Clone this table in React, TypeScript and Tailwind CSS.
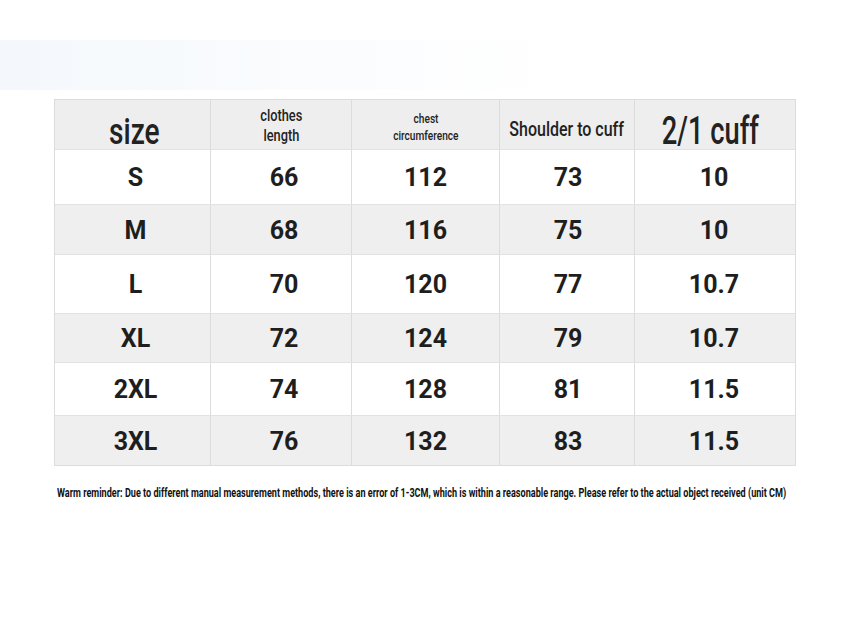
const rows = [
  { size: "S", len: "66", chest: "112", shoulder: "73", cuff: "10", h: "h-[55px]", bg: "bg-white" },
  { size: "M", len: "68", chest: "116", shoulder: "75", cuff: "10", h: "h-[50px]", bg: "bg-[#efefef]" },
  { size: "L", len: "70", chest: "120", shoulder: "77", cuff: "10.7", h: "h-[59px]", bg: "bg-white" },
  { size: "XL", len: "72", chest: "124", shoulder: "79", cuff: "10.7", h: "h-[49px]", bg: "bg-[#efefef]" },
  { size: "2XL", len: "74", chest: "128", shoulder: "81", cuff: "11.5", h: "h-[53px]", bg: "bg-white" },
  { size: "3XL", len: "76", chest: "132", shoulder: "83", cuff: "11.5", h: "h-[50px]", bg: "bg-[#efefef]" },
];

const cols = "grid grid-cols-[156px_141px_148px_135px_162px]";

export default function App() {
  return (
    <div className="relative w-[847px] h-[636px] bg-white overflow-hidden text-[#222] font-['Roboto',sans-serif]">
      {/* faint band behind the table top */}
      <div className="absolute left-0 top-[40px] w-[560px] h-[50px] bg-gradient-to-r from-[#f4f8fc] to-transparent" />

      <div className="relative pt-[99px] pl-[54px]">
        <div className="w-[742px] border border-[#dcdcdc]">
          <div className={`${cols} h-[49px] bg-[#eeeeee] font-medium`}>
            <div className="flex items-end justify-center border-r border-[#dcdcdc] pl-[4px]">
              <span className="inline-block text-[37px] leading-[34px] scale-x-[0.76]">size</span>
            </div>
            <div className="flex flex-col items-center justify-center border-r border-[#dcdcdc] text-[16px] leading-[20px] pt-[2px]">
              <span className="inline-block scale-x-[0.8]">clothes</span>
              <span className="inline-block scale-x-[0.8]">length</span>
            </div>
            <div className="flex flex-col items-center justify-center border-r border-[#dcdcdc] text-[13px] leading-[17px] pt-[4px]">
              <span className="inline-block scale-x-[0.78]">chest</span>
              <span className="inline-block scale-x-[0.78]">circumference</span>
            </div>
            <div className="flex items-center justify-center border-r border-[#dcdcdc] text-[20px] pt-[8px] whitespace-nowrap">
              <span className="inline-block scale-x-[0.8]">Shoulder to cuff</span>
            </div>
            <div className="flex items-end justify-center pr-[12px] whitespace-nowrap">
              <span className="inline-block text-[39px] leading-[36px] scale-x-[0.7]">2/1 cuff</span>
            </div>
          </div>

          {rows.map((r) => (
            <div
              key={r.size}
              className={`${cols} ${r.h} ${r.bg} border-t border-[#e2e2e2] font-bold text-[25px] text-[#1e1e1e]`}
            >
              <div className="flex items-center justify-center border-r border-[#dcdcdc] pl-[6px] pt-[2px]">{r.size}</div>
              <div className="flex items-center justify-center border-r border-[#dcdcdc] pl-[6px] pt-[2px]">{r.len}</div>
              <div className="flex items-center justify-center border-r border-[#dcdcdc] pt-[2px]">{r.chest}</div>
              <div className="flex items-center justify-center border-r border-[#dcdcdc] pl-[2px] pt-[2px]">{r.shoulder}</div>
              <div className="flex items-center justify-center pr-[4px] pt-[2px]">{r.cuff}</div>
            </div>
          ))}
        </div>

        <p className="mt-[18px] ml-[3px] text-[12.5px] font-bold text-[#111] whitespace-nowrap">
          <span className="inline-block origin-left scale-x-[0.728]">
            Warm reminder: Due to different manual measurement methods, there is an error of 1-3CM, which is within a reasonable range. Please refer to the actual object received (unit CM)
          </span>
        </p>
      </div>
    </div>
  );
}
